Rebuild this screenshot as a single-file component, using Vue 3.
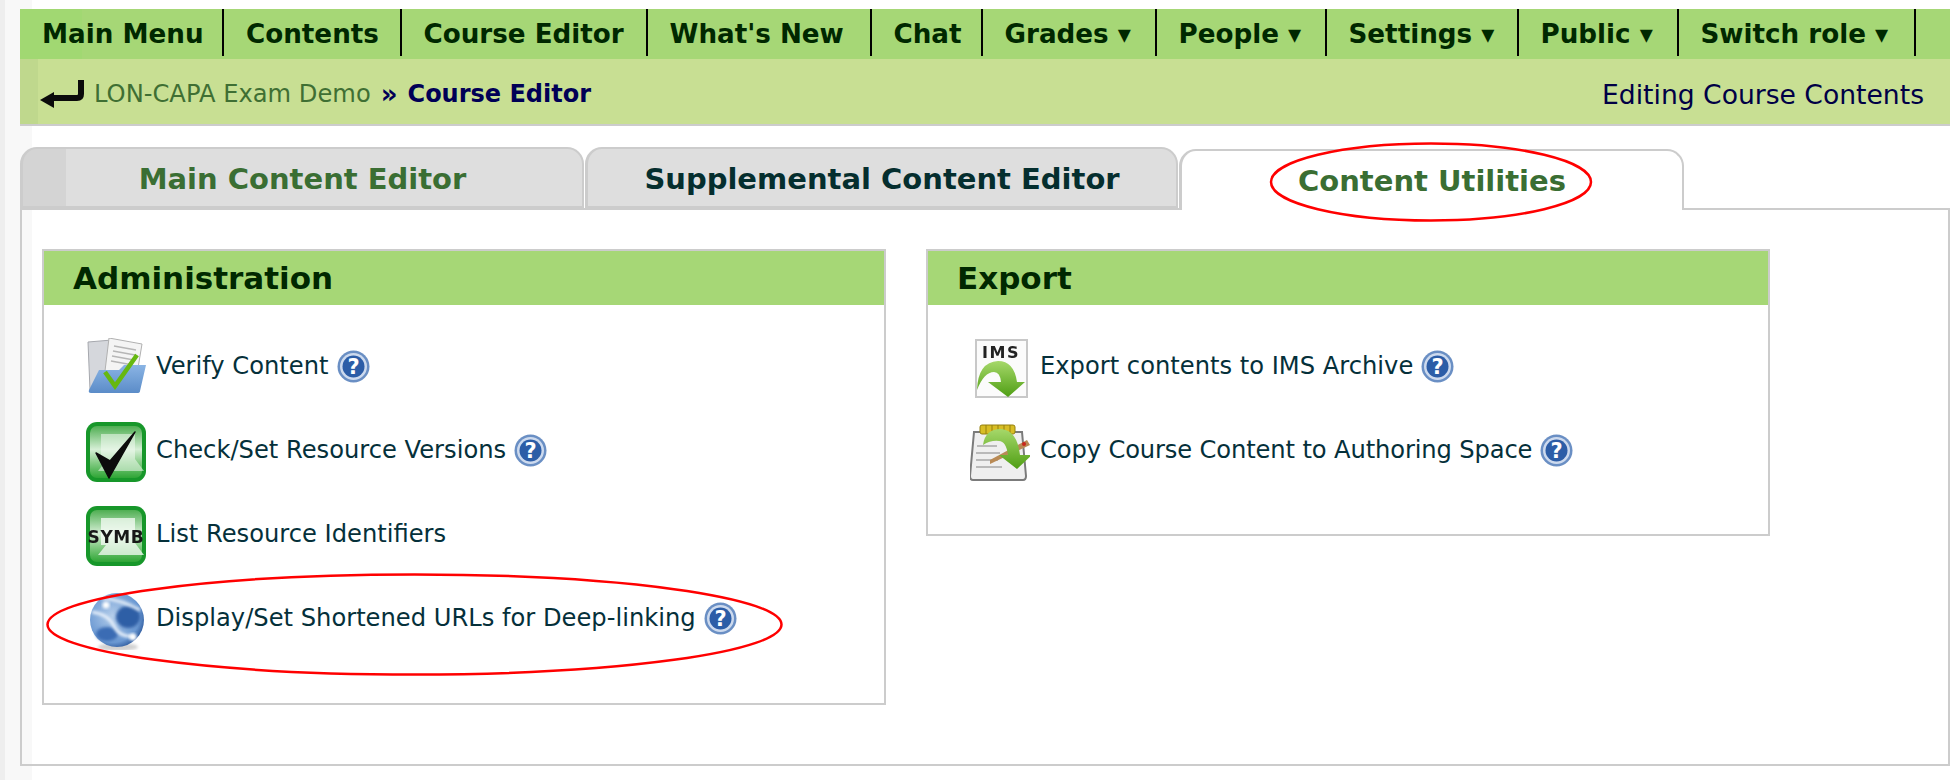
<script setup>
const navItems = [
  { label: 'Main Menu', w: 204 }, { label: 'Contents', w: 177.5 }, { label: 'Course Editor', w: 246 },
  { label: "What's New", w: 224 }, { label: 'Chat', w: 111 }, { label: 'Grades ▾', w: 174 },
  { label: 'People ▾', w: 170 }, { label: 'Settings ▾', w: 192 }, { label: 'Public ▾', w: 160 },
  { label: 'Switch role ▾', w: 237.5 }
]
const tabs = [
  { label: 'Main Content Editor', cls: 'tab-main' },
  { label: 'Supplemental Content Editor', cls: 'tab-supp' },
  { label: 'Content Utilities', cls: 'tab-util' }
]
const adminRows = [
  { icon: 'verify', text: 'Verify Content', help: true },
  { icon: 'check', text: 'Check/Set Resource Versions', help: true },
  { icon: 'symb', text: 'List Resource Identifiers', help: false },
  { icon: 'globe', text: 'Display/Set Shortened URLs for Deep-linking', help: true }
]
const exportRows = [
  { icon: 'ims', text: 'Export contents to IMS Archive', help: true },
  { icon: 'copy', text: 'Copy Course Content to Authoring Space', help: true, cls: 'tight' }
]
const panels = [
  { title: 'Administration', cls: 'panel-admin', rows: adminRows },
  { title: 'Export', cls: 'panel-export', rows: exportRows }
]
</script>

<template>
  <div class="page">
    <div class="strip"></div>
    <svg width="0" height="0" class="defs">
      <defs>
        <linearGradient id="tile" x1="0" y1="0" x2="0" y2="1">
          <stop offset="0" stop-color="#4fae52"/>
          <stop offset=".45" stop-color="#d6efd6"/>
          <stop offset=".7" stop-color="#86cc86"/>
          <stop offset="1" stop-color="#2ea535"/>
        </linearGradient>
        <linearGradient id="folder" x1="0" y1="0" x2="0" y2="1">
          <stop offset="0" stop-color="#8ab4e4"/>
          <stop offset="1" stop-color="#5b8cc8"/>
        </linearGradient>
        <linearGradient id="arrow" x1="0" y1="0" x2="0" y2="1">
          <stop offset="0" stop-color="#a6d86a"/>
          <stop offset="1" stop-color="#4f9e14"/>
        </linearGradient>
        <radialGradient id="sphere" cx=".42" cy=".42" r=".62">
          <stop offset="0" stop-color="#b4cdea"/>
          <stop offset=".8" stop-color="#6a98d2"/>
          <stop offset="1" stop-color="#2f5c9f"/>
        </radialGradient>
        <filter id="soft" x="-20%" y="-20%" width="140%" height="140%"><feGaussianBlur stdDeviation="1.6"/></filter>
      </defs>
    </svg>
    <div class="main">
      <nav class="nav">
        <a v-for="n in navItems" :key="n.label" class="nav-item" :style="{ width: n.w + 'px' }">{{ n.label }}</a>
      </nav>
      <div class="crumb">
        <svg class="back" width="46" height="30" viewBox="0 0 46 30">
          <path d="M41 1v14q0 4-4 4H12" fill="none" stroke="#0b0b0b" stroke-width="6"/>
          <path d="M0 21l14-8v16z" fill="#0b0b0b"/>
        </svg>
        <span class="crumb-link">LON-CAPA Exam Demo</span>
        <span class="crumb-sep">»</span>
        <b class="crumb-cur">Course Editor</b>
        <span class="crumb-right">Editing Course Contents</span>
      </div>
      <div class="tabs">
        <div v-for="t in tabs" :key="t.label" class="tab" :class="t.cls">{{ t.label }}</div>
      </div>
      <div class="body">
        <section v-for="p in panels" :key="p.title" class="panel" :class="p.cls">
          <h2 class="panel-title">{{ p.title }}</h2>
          <ul class="list">
            <li v-for="r in p.rows" :key="r.text" class="row" :class="r.cls">
              <svg class="ico" width="60" height="60" viewBox="0 0 60 60">
                <g v-if="r.icon === 'verify'">
                  <path d="M2 4l24-2 6 50H4z" fill="#d5d7dc" stroke="#a5a7ad"/>
                  <path d="M23 0l33 6-5 30-32-3z" fill="#f4f4f4" stroke="#b0b0b0"/>
                  <path d="M28 8l22 4M27 13l22 4M26 18l22 4M25 23l22 4" stroke="#b6b6b6" stroke-width="1.5"/>
                  <path d="M13 32h20l5-5h22l-6 26q0 2-3 2H5q-3 0-2-3z" fill="url(#folder)"/>
                  <path d="M19 34l10 14L51 17" fill="none" stroke="#66b810" stroke-width="4.5"/>
                </g>
                <g v-else-if="r.icon === 'check'">
                  <rect width="60" height="60" rx="11" fill="#17972a"/>
                  <rect x="4" y="4" width="52" height="52" rx="7" fill="url(#tile)"/>
                  <path d="M15 12h34v25l9 12H12l8-10H15z" fill="#f1faf1" opacity=".55"/>
                  <path d="M10 31l13 25L49 10 24 39z" fill="#0c0c0c" stroke="#0c0c0c" stroke-width="1.5" stroke-linejoin="round"/>
                </g>
                <g v-else-if="r.icon === 'symb'">
                  <rect width="60" height="60" rx="11" fill="#17972a"/>
                  <rect x="4" y="4" width="52" height="52" rx="7" fill="url(#tile)"/>
                  <path d="M15 12h34v25l9 12H12l8-10H15z" fill="#f7fcf7" opacity=".75"/>
                  <text x="30" y="37" text-anchor="middle" class="symb">SYMB</text>
                </g>
                <g v-else-if="r.icon === 'globe'">
                  <ellipse cx="32" cy="57" rx="20" ry="4" fill="#aaa" opacity=".55" filter="url(#soft)"/>
                  <circle cx="31" cy="30" r="27" fill="url(#sphere)"/>
                  <ellipse cx="42" cy="27" rx="12" ry="11" fill="#2f5ea6" filter="url(#soft)"/>
                  <ellipse cx="21" cy="44" rx="11" ry="7" fill="#3a6cb4" filter="url(#soft)"/>
                  <path d="M6 22q16 2 22 14t20 10" fill="none" stroke="#eaf2fb" stroke-width="3" filter="url(#soft)"/>
                  <path d="M16 8q20 2 38 12" fill="none" stroke="#e3edf8" stroke-width="3" filter="url(#soft)"/>
                  <circle cx="20" cy="15" r="3.5" fill="#fff" filter="url(#soft)"/>
                  <circle cx="47" cy="47" r="3.5" fill="#fff" filter="url(#soft)"/>
                </g>
                <g v-else-if="r.icon === 'ims'">
                  <rect x="6" y="2" width="51" height="57" fill="#fbfbfb" stroke="#c8c8c8" stroke-width="2"/>
                  <text x="31" y="20" text-anchor="middle" class="ims">IMS</text>
                  <path d="M7 52Q8 24 28 23Q44 23 47 44H55L38 59 18 44H31Q30 34 24 34 14 34 7 52z" fill="url(#arrow)"/>
                </g>
                <g v-else>
                  <path d="M4 10h48l4 44q0 4-3 4H3q-3 0-3-4z" fill="#efefef" stroke="#7b7b7b" stroke-width="2"/>
                  <rect x="10" y="3" width="35" height="9" rx="2" fill="#d8bd25" stroke="#94800f"/>
                  <path d="M16 3v9M22 3v9M28 3v9M34 3v9M40 3v9" stroke="#94800f" stroke-width="1"/>
                  <path d="M7 24h20M6 31h24M6 38h22M6 45h26" stroke="#a8a8a8" stroke-width="1.5"/>
                  <path d="M20 42L60 23l-3-5-37 20z" fill="#b98a55"/>
                  <circle cx="54" cy="22" r="2" fill="#c8261c"/>
                  <path d="M13 23Q15 7 31 7 47 8 50 33H62L47 47 29 33H38Q36 19 29 19 21 18 13 23z" fill="url(#arrow)"/>
                </g>
              </svg>
              <span>{{ r.text }}</span>
              <svg v-if="r.help" class="help" width="33" height="33" viewBox="0 0 33 33">
                <circle cx="16.5" cy="16.5" r="16" fill="#6a8fc4"/>
                <circle cx="16.5" cy="16.5" r="13.5" fill="#cddaee"/>
                <circle cx="16.5" cy="16.5" r="11" fill="#2c5da7"/>
                <text x="16.5" y="24" text-anchor="middle" class="help-q">?</text>
              </svg>
            </li>
          </ul>
        </section>
      </div>
    </div>
    <svg class="marks" width="1960" height="780" viewBox="0 0 1960 780">
      <ellipse cx="1431" cy="182" rx="160" ry="38.5" fill="none" stroke="#f00" stroke-width="2.5"/>
      <ellipse cx="414.5" cy="624.5" rx="367" ry="50" fill="none" stroke="#f00" stroke-width="2.5"/>
    </svg>
  </div>
</template>

<style scoped>
.page {
  position: relative;
  width: 1960px;
  height: 780px;
  overflow: hidden;
  background: #fff;
  font-family: "DejaVu Sans", Verdana, sans-serif;
  display: flex;
}
.defs { position: absolute; }
.strip {
  width: 32px;
  flex: none;
  margin-right: -32px;
  background: linear-gradient(90deg, #eee 0 5px, #f8f8f8 5px);
}
.main {
  position: relative;
  margin: 9px 10px 0 20px;
  width: 1930px;
}
.nav {
  display: flex;
  height: 50px;
  background: linear-gradient(90deg, #a1d872 0 62px, #a6d776 62px);
}
.nav-item {
  box-sizing: border-box;
  flex: none;
  display: flex;
  align-items: center;
  padding: 3px 0 0 22px;
  height: 47px;
  border-right: 2px solid #000;
  color: #002800;
  font-weight: 700;
  font-size: 26.2px;
  white-space: nowrap;
}
.crumb {
  height: 67px;
  box-sizing: border-box;
  display: flex;
  align-items: center;
  padding: 5px 26px 0 20px;
  background: linear-gradient(90deg, #bfd88d 0 18px, #c8df93 18px);
  border-bottom: 2px solid #ccc;
  font-size: 24.2px;
}
.back { margin: 0 8px 0 0; }
.crumb-link { color: #3f6f33; }
.crumb-sep { margin: 0 10px; color: #000056; font-weight: 700; font-size: 26px; line-height: 1; }
.crumb-cur { color: #000056; font-size: 24px; }
.crumb-right { margin-left: auto; color: #000046; font-size: 26.6px; }
.tabs {
  display: flex;
  margin-top: 21px;
  height: 61px;
  align-items: flex-end;
  position: relative;
  z-index: 1;
}
.tab {
  box-sizing: border-box;
  height: 61px;
  display: flex;
  align-items: center;
  justify-content: center;
  padding-top: 3px;
  border: 2px solid #ccc;
  border-left-width: 3px;
  border-radius: 17px 17px 0 0;
  font-weight: 700;
  font-size: 29px;
  background: #dedede;
}
.tab-main { width: 564px; color: #3a6e33; background: linear-gradient(90deg, #d4d4d4 0 43px, #dedede 43px); }
.tab-supp { width: 593px; margin-left: 1px; color: #052e2e; }
.tab-util { width: 505px; margin-left: 1px; padding-top: 0; color: #3a6e33; background: #fff; border-bottom: 0; margin-bottom: -2px; }
.body {
  box-sizing: border-box;
  height: 558px;
  border: 2px solid #ccc;
  display: flex;
  align-items: flex-start;
  gap: 40px;
  padding: 39px 20px 0;
}
.panel {
  box-sizing: border-box;
  width: 844px;
  border: 2px solid #ccc;
}
.panel-admin { height: 456px; }
.panel-export { height: 287px; }
.panel-title {
  margin: 0;
  height: 54px;
  display: flex;
  align-items: center;
  padding-left: 29px;
  background: #a6d776;
  color: #002800;
  font-size: 31px;
  font-weight: 700;
}
.list {
  list-style: none;
  margin: 0;
  padding: 31px 0 0 42px;
}
.row {
  display: flex;
  align-items: center;
  height: 60px;
  margin-bottom: 24px;
  color: #05303a;
  font-size: 24.2px;
  white-space: nowrap;
}
.tight { letter-spacing: -.13px; }
.ico { flex: none; margin: 4px 10px 0 0; filter: blur(.4px); }
.help { flex: none; margin-left: 8px; }
.help-q { font: 700 21px "DejaVu Sans", sans-serif; fill: #fff; }
.symb { font: 700 17px "DejaVu Sans", sans-serif; fill: #181818; letter-spacing: .6px; }
.ims { font: 700 16px "DejaVu Sans", sans-serif; fill: #222; letter-spacing: 1.5px; }
.marks { position: absolute; left: 0; top: 0; z-index: 2; pointer-events: none; }
</style>
